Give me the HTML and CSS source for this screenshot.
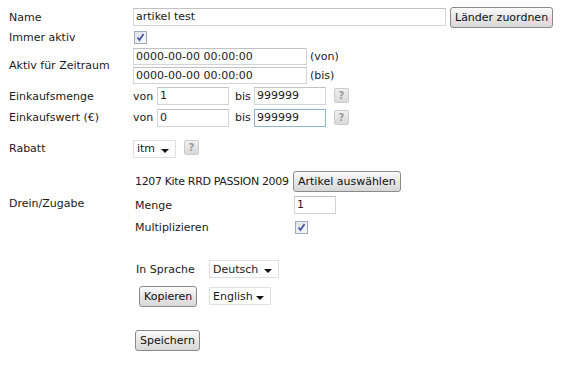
FILE: index.html
```html
<!DOCTYPE html>
<html lang="de">
<head>
    <meta charset="UTF-8">
    <title>Rabatt bearbeiten</title>
    <link rel="stylesheet" href="styles.css">
</head>
<body>
    <div class="form">
        <div class="row row-name">
            <div class="lbl">Name</div>
            <div class="field">
                <span class="input input-name">artikel test</span>
                <span class="btn">Länder zuordnen</span>
            </div>
        </div>
        <div class="row row-active">
            <div class="lbl">Immer aktiv</div>
            <div class="field">
                <span class="check"><svg width="11" height="11" viewBox="0 0 11 11"><path d="M2.5 5.5 L4.5 8 L8.5 2" fill="none" stroke="#4459a6" stroke-width="1.8"/></svg></span>
            </div>
        </div>
        <div class="row row-range">
            <div class="lbl">Aktiv für Zeitraum</div>
            <div class="field stack">
                <div class="line"><span class="input input-date">0000-00-00 00:00:00</span><span class="note">(von)</span></div>
                <div class="line"><span class="input input-date">0000-00-00 00:00:00</span><span class="note">(bis)</span></div>
            </div>
        </div>
        <div class="row row-amount">
            <div class="lbl">Einkaufsmenge</div>
            <div class="field">
                <span class="word">von</span><span class="input input-num">1</span>
                <span class="word word-bis">bis</span><span class="input input-num">999999</span>
                <span class="help">?</span>
            </div>
        </div>
        <div class="row row-value">
            <div class="lbl">Einkaufswert (€)</div>
            <div class="field">
                <span class="word">von</span><span class="input input-num">0</span>
                <span class="word word-bis">bis</span><span class="input input-num focus">999999</span>
                <span class="help">?</span>
            </div>
        </div>
        <div class="row row-discount">
            <div class="lbl">Rabatt</div>
            <div class="field">
                <span class="select select-itm">itm</span>
                <span class="help">?</span>
            </div>
        </div>
        <div class="row row-bonus">
            <div class="lbl">Drein/Zugabe</div>
            <div class="field sub">
                <div class="sub-row sub-article"><span class="article">1207 Kite RRD PASSION 2009</span><span class="btn">Artikel auswählen</span></div>
                <div class="sub-row sub-qty"><span class="sub-lbl">Menge</span><span class="input input-qty">1</span></div>
                <div class="sub-row sub-multi">
                    <span class="sub-lbl">Multiplizieren</span>
                    <span class="check"><svg width="11" height="11" viewBox="0 0 11 11"><path d="M2.5 5.5 L4.5 8 L8.5 2" fill="none" stroke="#4459a6" stroke-width="1.8"/></svg></span>
                </div>
            </div>
        </div>
        <div class="row row-lang">
            <div class="lbl"></div>
            <div class="field lang">
                <div class="lang-row lang-in"><span class="lang-lbl">In Sprache</span><span class="select select-de">Deutsch</span></div>
                <div class="lang-row lang-copy"><span class="lang-lbl"><span class="btn">Kopieren</span></span><span class="select select-en">English</span></div>
            </div>
        </div>
        <div class="row row-save">
            <div class="lbl"></div>
            <div class="field"><span class="btn">Speichern</span></div>
        </div>
    </div>
</body>
</html>
```

FILE: styles.css
```css
body {
    margin: 0;
    padding: 6px 0 0 9px;
    font-family: "DejaVu Sans", Verdana, sans-serif;
    font-size: 11px;
    color: #1a1a1a;
    background-color: #fff;
}
.row {
    display: flex;
    align-items: center;
}
.lbl {
    width: 124px;
    flex-shrink: 0;
}
.field {
    display: flex;
    align-items: center;
}
.row-name { height: 22px; }
.row-active { height: 18px; }
.row-range { height: 39px; }
.row-amount { height: 22px; }
.row-value { height: 21px; }
.row-discount { height: 41px; }
.row-bonus { height: 68px; }
.row-lang { height: 91px; align-items: flex-start; padding-top: 22px; box-sizing: border-box; }
.row-save { height: 24px; }
.input {
    display: inline-block;
    box-sizing: border-box;
    height: 18px;
    line-height: 16px;
    padding: 0 2px;
    border: 1px solid #d4d4d4;
    border-top-color: #c2c2c2;
    background-color: #fff;
    white-space: nowrap;
    overflow: hidden;
}
.input.focus {
    border-color: #8fb4d8;
}
.input-name { width: 313px; }
.input-date { width: 174px; height: 17px; line-height: 15px; }
.input-num { width: 72px; }
.input-qty { width: 42px; }
.stack {
    flex-direction: column;
    align-items: flex-start;
    gap: 2px;
}
.line {
    display: flex;
    align-items: center;
}
.note { margin-left: 3px; }
.word { width: 24px; }
.word-bis { margin-left: 6px; width: 19px; }
.btn {
    display: inline-block;
    box-sizing: border-box;
    height: 21px;
    line-height: 19px;
    padding: 0 4px;
    border: 1px solid #8a8a8a;
    border-radius: 3px;
    background: linear-gradient(#fbfbfb, #e6e6e6 50%, #d8d8d8);
    color: #111;
    white-space: nowrap;
}
.row-name .btn { margin-left: 4px; }
.check {
    display: inline-block;
    box-sizing: border-box;
    width: 13px;
    height: 13px;
    margin-left: 1px;
    border: 1px solid #a2acb8;
    background: linear-gradient(135deg, #dfe3e8, #f8f9fa);
}
.check svg {
    display: block;
}
.help {
    display: inline-block;
    box-sizing: border-box;
    width: 15px;
    height: 15px;
    margin-left: 8px;
    margin-top: 1px;
    align-self: flex-start;
    border: 1px solid #cdcdcd;
    border-radius: 2px;
    background: linear-gradient(#f0f0f0, #d9d9d9);
    color: #9a9a9a;
    text-align: center;
    line-height: 13px;
    font-size: 10px;
    font-weight: bold;
}
.select {
    display: inline-flex;
    align-items: center;
    box-sizing: border-box;
    height: 18px;
    padding: 0 3px;
    border: 1px solid #e0e0e0;
    background-color: #fff;
    position: relative;
}
.select::after {
    content: "";
    position: absolute;
    right: 6px;
    top: 8px;
    border-left: 4px solid transparent;
    border-right: 4px solid transparent;
    border-top: 4px solid #111;
}
.select-itm { width: 43px; }
.select-de { width: 70px; }
.select-en { width: 62px; }
.row-discount .help { align-self: center; margin-top: -2px; }
.sub {
    flex-direction: column;
    align-items: flex-start;
    padding-left: 2px;
}
.sub-row {
    display: flex;
    align-items: center;
}
.sub-article { height: 24px; }
.article {
    width: 158px;
    letter-spacing: -0.35px;
}
.sub-qty { height: 24px; }
.sub-multi { height: 20px; }
.sub-lbl { width: 159px; }
.lang {
    flex-direction: column;
    align-items: flex-start;
    padding-left: 3px;
}
.lang-row {
    display: flex;
    align-items: center;
}
.lang-in { height: 20px; }
.lang-copy { height: 26px; margin-top: 4px; }
.lang-lbl { width: 73px; }
.lang-copy .lang-lbl { padding-left: 3px; width: 70px; }
.row-save .field { padding-left: 2px; }
```
